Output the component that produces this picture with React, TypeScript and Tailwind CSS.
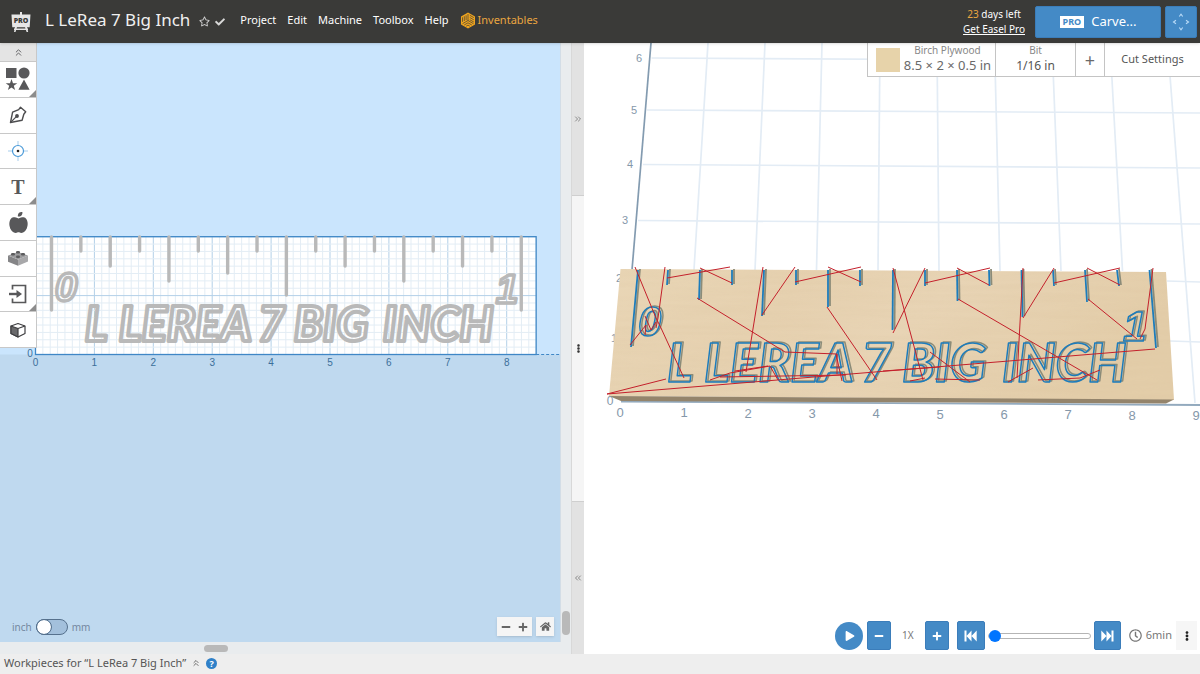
import React from "react";
import { FaAppleAlt, FaHome, FaPlus, FaMinus, FaPlay, FaCheck, FaRegStar, FaRegClock, FaEllipsisV } from "react-icons/fa";
import { ChevronsLeft, ChevronsRight, ChevronsUp } from "lucide-react";

/* ---------- 2D design drawing ---------- */

const SCALE = 58.9;
const ORIGIN_X = 35.5;
const ORIGIN_Y = 311.5;
const BOARD_W = 8.5 * SCALE;
const BOARD_H = 2 * SCALE;

const TICK_ENDS = [267, 208, 223, 208, 238, 208, 230, 208, 252, 208, 223, 208, 238, 208, 223, 208, 267];

const WORDS_2D = [
  { t: "L", x: 85 },
  { t: "LEREA", x: 119 },
  { t: "7", x: 258 },
  { t: "BIG", x: 294 },
  { t: "INCH", x: 383 },
];

function DesignDrawing() {
  const vertical = Array.from({ length: 69 }, (_, i) => i);
  const horizontal = Array.from({ length: 17 }, (_, i) => i);
  const top = ORIGIN_Y - BOARD_H;
  return (
    <svg className="absolute inset-0 h-full w-full" aria-label="Design canvas">
      <rect width="100%" height="100%" fill="#bfd9ef" />
      <rect width="100%" height={ORIGIN_Y} fill="#cae5fd" />
      <rect x={ORIGIN_X} y={top} width={BOARD_W} height={BOARD_H} fill="#fff" />
      {vertical.map((i) => (
        <line
          key={"v" + i}
          x1={ORIGIN_X + (i * SCALE) / 8}
          x2={ORIGIN_X + (i * SCALE) / 8}
          y1={top}
          y2={ORIGIN_Y}
          stroke={i % 8 === 0 ? "#b3d0e8" : "#e3edf5"}
        />
      ))}
      {horizontal.map((i) => (
        <line
          key={"h" + i}
          x1={ORIGIN_X}
          x2={ORIGIN_X + BOARD_W}
          y1={ORIGIN_Y - (i * SCALE) / 8}
          y2={ORIGIN_Y - (i * SCALE) / 8}
          stroke={i % 8 === 0 ? "#b3d0e8" : "#e3edf5"}
        />
      ))}
      <rect x={ORIGIN_X} y={top} width={BOARD_W} height={BOARD_H} fill="none" stroke="#3f87c6" strokeWidth="1.3" />
      <line x1={ORIGIN_X + BOARD_W} x2="100%" y1={ORIGIN_Y} y2={ORIGIN_Y} stroke="#3f87c6" strokeDasharray="3 2" />
      <g stroke="#b9b9b9" strokeWidth="3.4" strokeLinecap="round">
        {TICK_ENDS.map((end, i) => (
          <line key={i} x1={51.5 + i * 29.36} x2={51.5 + i * 29.36} y1="194" y2={end} />
        ))}
      </g>
      <g
        fill="none"
        stroke="#b9b9b9"
        strokeWidth="4"
        strokeLinejoin="round"
        className="font-['Lato',sans-serif] text-[47px] font-black italic"
      >
        {WORDS_2D.map((w) => (
          <text key={w.x} x={w.x} y="298">
            {w.t}
          </text>
        ))}
        <g strokeWidth="3.4" className="font-['Liberation_Sans',sans-serif] text-[40px] font-bold">
          <text x="55" y="258">0</text>
          <text x="496" y="260">1</text>
        </g>
      </g>
      <g fill="#3b6f9a" textAnchor="middle" className="font-['Liberation_Sans',sans-serif] text-[10px]">
        {[0, 1, 2, 3, 4, 5, 6, 7, 8].map((n) => (
          <text key={n} x={ORIGIN_X + n * SCALE} y="323">
            {n}
          </text>
        ))}
        <text x="30" y="314">0</text>
      </g>
    </svg>
  );
}

/* ---------- 3D preview drawing ---------- */

const GRID_3D = [
  [651.5, 58, 1200, 61], [647, 110, 1200, 113], [643, 164.5, 1200, 168], [638, 220.5, 1200, 224],
  [1167, 281, 1200, 282], [1170, 341, 1200, 342],
  [708, 43, 694, 270], [765, 43, 755, 270], [822, 43, 816.5, 270], [880, 43, 878, 270], [937, 43, 939, 271],
  [994.5, 43, 1000, 271], [1052, 43, 1061, 271], [1110, 43, 1122.5, 271], [1167.5, 43, 1195, 403],
];

const TICKS_3D = [
  [638, 631, 347], [668, 667, 285], [700, 699, 300], [732, 732, 285], [764, 762, 316], [796, 796, 285],
  [828, 828, 307], [860, 860, 286], [893, 892.5, 330], [925, 925, 286], [957, 957.5, 301], [989, 989.5, 286],
  [1021.5, 1022.5, 317], [1053, 1054, 286], [1085, 1087, 302], [1117, 1119, 286], [1149.5, 1156, 348],
];

const TRAVEL_MOVES = [
  "635,267 656,318 661,328 684,378", "630,345 646,325 645,335", "645,316 651,330 656,322", "665,267 658,318 656,328",
  "667,278 730,267", "732,283 700,268", "697,298 785,352 837,354 837,374", "763,267 746,372", "795,267 762,315",
  "795,282 861,267", "828,267 861,282", "827,307 877,380", "666,379 607,394 1155,349", "710,380 730,373 770,366 778,380",
  "720,377 846,375", "735,371 768,366", "893,268 923,380", "925,268 893,333", "925,283 990,268", "957,268 989,285",
  "958,299 1097,380", "1023,268 1017,378", "1054,268 1023,318", "1054,283 1120,268", "1087,268 1120,285",
  "1088,299 1137,339", "1153,268 1145,329 1140,339", "930,352 970,382", "935,379 980,380", "883,371 940,367",
  "1038,380 1080,378 1100,370", "1008,382 1033,368", "910,381 925,378", "836,354 842,381",
];

const WORDS_3D = [
  { t: "L", x: 667 },
  { t: "LEREA", x: 704 },
  { t: "7", x: 861 },
  { t: "BIG", x: 902 },
  { t: "INCH", x: 1002 },
];

function ToolOutline() {
  return (
    <g className="drop-shadow-[2px_-1px_0_#8b8b78]" fill="none" stroke="#1c7cbc" strokeWidth="1.5" strokeLinejoin="round">
      {TICKS_3D.map(([x1, x2, y2]) => (
        <line key={x1} x1={x1} y1="270" x2={x2} y2={y2} strokeWidth="1.8" />
      ))}
      <g className="font-['Lato',sans-serif] text-[53px] font-black italic">
        {WORDS_3D.map((w) => (
          <text key={w.x} x={w.x} y="382">
            {w.t}
          </text>
        ))}
        <g className="font-['Liberation_Sans',sans-serif] text-[42px] font-bold">
          <text x="638" y="336">0</text>
          <text x="1123" y="341">1</text>
        </g>
      </g>
    </g>
  );
}

function PreviewDrawing() {
  return (
    <svg className="absolute inset-0 h-full w-full" viewBox="584 43 616 611" preserveAspectRatio="xMinYMin slice" aria-label="Carve preview">
      <defs>
        <linearGradient id="wood" x1="0" y1="0" x2="1" y2="0.25">
          <stop offset="0" stopColor="#e9d6b6" />
          <stop offset="0.35" stopColor="#e6d1b0" />
          <stop offset="0.6" stopColor="#e8d4b5" />
          <stop offset="1" stopColor="#e3cda9" />
        </linearGradient>
        <filter id="grain" x="0" y="0" width="100%" height="100%">
          <feTurbulence type="fractalNoise" baseFrequency="0.012 0.2" numOctaves="2" seed="4" />
          <feColorMatrix values="0 0 0 0 0.62  0 0 0 0 0.45  0 0 0 0 0.25  0.5 0 0 0 -0.14" />
          <feComposite in2="SourceGraphic" operator="in" />
        </filter>
      </defs>
      <g stroke="#e3ecf5" strokeWidth="1.7">
        {GRID_3D.map(([x1, y1, x2, y2], i) => (
          <line key={i} x1={x1} y1={y1} x2={x2} y2={y2} />
        ))}
      </g>
      <line x1="651" y1="43" x2="632" y2="270" stroke="#839bb0" strokeWidth="1.7" />
      <g fill="#8598aa" textAnchor="middle" className="font-['Liberation_Sans',sans-serif] text-[11px]">
        <text x="639" y="62">6</text>
        <text x="634" y="114">5</text>
        <text x="630" y="168">4</text>
        <text x="625" y="224">3</text>
        <text x="619" y="282">2</text>
        <text x="614" y="342">1</text>
      </g>
      <polygon points="620.5,269 1166,272 1174,400 609,396" fill="url(#wood)" />
      <polygon points="620.5,269 1166,272 1174,400 609,396" fill="#000" filter="url(#grain)" opacity="0.3" />
      <line x1="621" y1="401.5" x2="1200" y2="405" stroke="#93aabe" strokeWidth="1.8" />
      <polygon points="609,396 1174,399.500 1166,403.500 621,401" fill="#94846b" />
      <ToolOutline />
      <g fill="none" stroke="#c4202b" strokeWidth="1" strokeLinejoin="round">
        {TRAVEL_MOVES.map((p) => (
          <polyline key={p} points={p} />
        ))}
      </g>
      <g fill="#8598aa" textAnchor="middle" className="font-['Liberation_Sans',sans-serif] text-[13px]">
        {[0, 1, 2, 3, 4, 5, 6, 7, 8, 9].map((n) => (
          <text key={n} x={620 + n * 64} y={417 + n / 3}>
            {n}
          </text>
        ))}
        <text x="610" y="405" className="text-[12px]">0</text>
      </g>
    </svg>
  );
}

/* ---------- icons ---------- */

function EaselLogo() {
  return (
    <svg width="22" height="22" viewBox="0 0 22 22" aria-label="Easel Pro">
      <path d="M10 1h2v3h-2zM5 16h2l-1.500 5H4zM15 16h2l1.200 5h-1.600zM4 17.600h14v1.300H4z" fill="#e6e6e6" />
      <path d="M1.500 3.500h19l-.8 12.700H2.300z" fill="#e6e6e6" />
      <text x="11" y="12" textAnchor="middle" fill="#3a3a38" className="font-['Open_Sans',sans-serif] text-[7px] font-extrabold">PRO</text>
    </svg>
  );
}

function CubeLogo() {
  return (
    <svg width="16" height="17" viewBox="0 0 16 17" aria-hidden="true">
      <path d="M8 .5l7 4v8l-7 4-7-4v-8z" fill="#f0a51e" />
      <g stroke="#3a3a38" strokeWidth="0.7" fill="none">
        <path d="M8 2v6.500l5.500 3.200M8 8.500l-5.500 3.200" />
        <path d="M2.500 5.300v4.500M4.300 4.300v4.700M6.100 3.300v4.800" />
        <path d="M9.800 3.300l4 2.300M9.800 5.500l4 2.300M9.800 7.700l4 2.300" />
        <path d="M4.200 13l3.800-2.200 3.800 2.200M6.200 14.200L8 13.100l1.800 1.100" />
      </g>
    </svg>
  );
}

const ShapesIcon = () => (
  <svg width="26" height="26" viewBox="0 0 26 26" fill="#58585a">
    <rect x="1" y="2" width="10.500" height="10" />
    <circle cx="19" cy="7" r="5.600" />
    <path d="M6.500 13l1.500 4.200h4.300l-3.500 2.600 1.300 4.300-3.600-2.600-3.600 2.600 1.300-4.300L.7 17.200H5zM19 13.500l5.600 10.300H13.400z" />
  </svg>
);

const PenIcon = () => (
  <svg width="20" height="20" viewBox="0 0 20 20" fill="none" stroke="#4d4d4f" strokeWidth="1.400" strokeLinejoin="round">
    <path d="M2.500 17.500L4.600 7.200l6.100-2.600 1.800-2.400 5.200 4.600-1.900 2.400-1.700 6.100z" />
    <path d="M2.500 17.500l5.800-5.800" strokeWidth="1.100" />
    <circle cx="9" cy="11" r="1.200" fill="#4d4d4f" />
  </svg>
);

const DrillIcon = () => (
  <svg width="20" height="20" viewBox="0 0 20 20" fill="none" stroke="#4a9ad8">
    <path d="M10 0v4.500M10 15.500V20M0 10h4.500M15.500 10H20" stroke="#a7cdec" />
    <circle cx="10" cy="10" r="5.500" strokeWidth="1.200" />
    <circle cx="10" cy="10" r="1.300" fill="#222" stroke="none" />
  </svg>
);

const BrickIcon = () => (
  <svg width="22" height="18" viewBox="0 0 22 18">
    <path d="M1 6.500l10 4v6.300l-10-4z" fill="#858587" />
    <path d="M11 10.500l10-4v6l-10 4.300z" fill="#a8a8aa" />
    <path d="M1 6.500L11 3l10 3.500-10 4z" fill="#9c9c9e" />
    <g fill="#5c5c5e">
      <rect x="9" y="2" width="4" height="2.400" rx="1.200" />
      <rect x="4" y="4" width="4" height="2.400" rx="1.200" />
      <rect x="14" y="4" width="4" height="2.400" rx="1.200" />
      <rect x="9" y="6.500" width="4" height="2.400" rx="1.200" />
    </g>
  </svg>
);

const ImportIcon = () => (
  <svg width="20" height="20" viewBox="0 0 20 20" fill="none" stroke="#58585a" strokeWidth="1.700">
    <path d="M4.500 5.500v-4h13v17h-13v-4" />
    <path d="M1 10h8" strokeWidth="2.400" />
    <path d="M8.500 6l5.500 4-5.500 4z" fill="#58585a" stroke="none" />
  </svg>
);

const BoxIcon = () => (
  <svg width="18" height="18" viewBox="0 0 18 18" fill="none" stroke="#3f3f41" strokeWidth="1.200" strokeLinejoin="round">
    <path d="M2 5l7-2.500L16 5v7.500L9 16l-7-3.500z" fill="#fff" />
    <path d="M2 5l7 2.500V16l-7-3.500z" fill="#6a6a6c" />
    <path d="M9 7.500L16 5" />
  </svg>
);

const FastBack = () => (
  <svg width="13" height="12" viewBox="0 0 13 12" fill="#fff">
    <path d="M.5.5h2v11h-2zM7.500.5v11L2.500 6zM12.700.5v11L7.500 6z" />
  </svg>
);

const FastForward = () => (
  <svg width="13" height="12" viewBox="0 0 13 12" fill="#fff">
    <path d="M10.500.5h2v11h-2zM5.500.5v11l5-5.500zM.3.5v11L5.500 6z" />
  </svg>
);

const MoveIcon = () => (
  <svg width="18" height="18" viewBox="0 0 18 18" fill="none" stroke="#b9dbf7" strokeWidth="1.100">
    <path d="M7.300 3.500L9 1.200l1.700 2.300M7.300 14.500L9 16.800l1.700-2.300M4 7.300L1.500 9 4 10.700M14 7.300L16.500 9 14 10.700" />
  </svg>
);

/* ---------- page parts ---------- */

const TOOLS: { name: string; icon: React.ReactNode; more?: boolean }[] = [
  { name: "Shapes", icon: <ShapesIcon />, more: true },
  { name: "Pen", icon: <PenIcon /> },
  { name: "Drill", icon: <DrillIcon /> },
  { name: "Text", icon: <span className="font-['Liberation_Serif',serif] text-xl font-bold leading-none">T</span>, more: true },
  { name: "Icons", icon: <FaAppleAlt size={21} /> },
  { name: "Apps", icon: <BrickIcon /> },
  { name: "Import", icon: <ImportIcon />, more: true },
  { name: "3D", icon: <BoxIcon /> },
];

function Header() {
  return (
    <header className="relative z-10 flex h-[43px] shrink-0 items-center bg-[#3a3a38] pr-[3px] pl-[10px] text-white shadow-sm">
      <a href="#home" aria-label="Home"><EaselLogo /></a>
      <h1 className="ml-[13px] pb-[3px] text-[17px] leading-6 whitespace-nowrap text-[#f0f0f0]">L LeRea 7 Big Inch</h1>
      <button aria-label="Favorite" className="ml-[9px] text-[#d0d0d0]"><FaRegStar size={11} /></button>
      <span className="ml-[5px] text-[#d8d8d8]"><FaCheck size={10} /></span>
      <nav className="ml-[15px] flex items-center gap-[11px] pb-[3px] text-[11px] leading-4">
        <button>Project</button>
        <button>Edit</button>
        <button>Machine</button>
        <button>Toolbox</button>
        <button>Help</button>
        <a href="#inventables" className="flex items-center gap-[2px] text-[#eaa640]"><CubeLogo />Inventables</a>
      </nav>
      <div className="mr-[10px] ml-auto text-center text-[10px] leading-[15px]">
        <p><span className="text-[#eaa640]">23</span> days left</p>
        <a href="#pro" className="underline">Get Easel Pro</a>
      </div>
      <button className="flex h-8 w-[126px] items-center justify-center gap-[7px] rounded-[2px] border border-[#3b7dba] bg-[#448ac6] text-[13px]">
        <span className="bg-white px-[3px] text-[9px] leading-[12px] font-bold text-[#448ac6]">PRO</span>
        Carve...
      </button>
      <button aria-label="Jog machine" className="ml-1 flex h-8 w-8 items-center justify-center rounded-[2px] border border-[#3b7dba] bg-[#448ac6]"><MoveIcon /></button>
    </header>
  );
}

function Toolbar() {
  return (
    <div className="relative flex h-[305px] w-[37px] flex-col divide-y divide-[#c8c8c8] border-r border-b border-[#c8c8c8] bg-white text-[#58585a]">
      <button aria-label="Collapse toolbar" className="flex h-[19px] items-center justify-center bg-[#e4e4e4]"><ChevronsUp size={11} /></button>
      {TOOLS.map((t) => (
        <button key={t.name} aria-label={t.name} className="relative flex flex-1 items-center justify-center">
          {t.icon}
          {t.more && <span className="absolute right-0 bottom-0 border-b-[7px] border-l-[7px] border-b-[#8c8c8c] border-l-transparent" />}
        </button>
      ))}
    </div>
  );
}

function DesignPane() {
  return (
    <section className="flex min-w-0 flex-1 flex-col bg-[#e9ecee]">
      <div className="flex flex-1">
        <div className="relative flex flex-1 flex-col overflow-hidden border-r border-[#d3dde6]">
          <DesignDrawing />
          <Toolbar />
          <div className="relative mt-auto flex items-center pr-[6px] pb-[6px] pl-3 text-[#666]">
            <label className="flex items-center gap-1 text-[10px] leading-4 text-[#7488a0]">
              inch
              <input type="checkbox" role="switch" aria-label="Use millimetres" className="h-4 w-8 appearance-none rounded-full border border-[#56718d] bg-[#a3c0dc] before:block before:h-[14px] before:w-[14px] before:rounded-full before:bg-white before:outline before:outline-[#56718d]" />
              mm
            </label>
            <div className="ml-auto flex h-[19px] w-[35px] items-center justify-around bg-[#f5f5f5] shadow-sm">
              <button aria-label="Zoom out"><FaMinus size={10} /></button>
              <button aria-label="Zoom in"><FaPlus size={10} /></button>
            </div>
            <button aria-label="Reset view" className="ml-1 flex h-[19px] w-[18px] items-center justify-center bg-[#f5f5f5] shadow-sm"><FaHome size={11} /></button>
          </div>
        </div>
        <div className="flex w-[10px] flex-col items-center justify-end pb-[7px]">
          <div className="h-6 w-2 rounded-full bg-[#b9b9b9]" />
        </div>
      </div>
      <div className="flex h-3 items-center pl-[204px]">
        <div className="h-[7px] w-6 rounded-full bg-[#b9b9b9]" />
      </div>
    </section>
  );
}

function Splitter() {
  return (
    <div className="flex w-[13px] flex-col border-l border-[#d8d8d8] text-[#777]">
      <button aria-label="Expand design" className="flex flex-1 items-center justify-center border-b border-[#cfcfcf] bg-[#e2e2e2]"><ChevronsRight size={10} /></button>
      <button aria-label="Resize panes" className="flex flex-2 items-center justify-center bg-[#f5f5f5] text-[#333]"><FaEllipsisV size={9} /></button>
      <button aria-label="Expand preview" className="flex flex-1 items-center justify-center border-t border-[#cfcfcf] bg-[#e2e2e2]"><ChevronsLeft size={10} /></button>
    </div>
  );
}

function PreviewPane() {
  const blue = "flex h-[29px] items-center justify-center rounded-[2px] border border-[#3b7dba] bg-[#448ac6] text-white";
  return (
    <section className="relative flex w-[51.33%] flex-col overflow-hidden bg-white">
      <PreviewDrawing />
      <div className="relative ml-auto flex h-[34px] divide-x divide-[#c4c4c4] border-b border-l border-[#c4c4c4] bg-white text-[#6a6a6a]">
        <button className="flex w-32 items-center pl-2">
          <span className="h-6 w-6 shrink-0 bg-[#e7d3aa]" />
          <span className="flex flex-1 flex-col items-center pb-[2px] whitespace-nowrap">
            <span className="text-[10px] leading-[14px] text-[#888]">Birch Plywood</span>
            <span className="text-[13px] leading-[17px]">8.5 × 2 × 0.5 in</span>
          </span>
        </button>
        <button className="flex w-20 flex-col items-center justify-center pb-[2px]">
          <span className="text-[10px] leading-[14px] text-[#888]">Bit</span>
          <span className="text-[12px] leading-[17px] text-[#555]">1/16 in</span>
        </button>
        <button aria-label="Add bit" className="w-[29px] text-lg leading-none">+</button>
        <button className="w-[95px] text-[11px] text-[#555]">Cut Settings</button>
      </div>
      <div className="relative mt-auto mr-[3px] mb-1 ml-auto flex items-center text-[#777]">
        <button aria-label="Play" className="mr-1 flex h-7 w-7 items-center justify-center rounded-full bg-[#448ac6] pl-[2px] text-white"><FaPlay size={10} /></button>
        <button aria-label="Slower" className={blue + " w-6"}><FaMinus size={10} /></button>
        <span className="w-[34px] text-center text-[10px]">1X</span>
        <button aria-label="Faster" className={blue + " w-6"}><FaPlus size={10} /></button>
        <button aria-label="To start" className={blue + " ml-2 w-7"}><FastBack /></button>
        <input
          type="range"
          aria-label="Simulation position"
          defaultValue={0}
          className="mx-[3px] h-[6px] w-[103px] appearance-none rounded-full border border-[#b5b5b5] bg-white [&::-webkit-slider-thumb]:h-3 [&::-webkit-slider-thumb]:w-3 [&::-webkit-slider-thumb]:appearance-none [&::-webkit-slider-thumb]:rounded-full [&::-webkit-slider-thumb]:bg-[#0075ff]"
        />
        <button aria-label="To end" className={blue + " mr-2 w-[27px]"}><FastForward /></button>
        <FaRegClock size={13} />
        <span className="ml-1 text-[11px]">6min</span>
        <button aria-label="More" className="ml-1 flex h-[29px] w-[21px] items-center justify-center bg-[#f6f6f6] text-[#222]"><FaEllipsisV size={10} /></button>
      </div>
    </section>
  );
}

export default function App() {
  return (
    <div className="flex min-h-screen flex-col bg-[#eee] font-['Noto_Sans',sans-serif]">
      <Header />
      <main className="flex flex-1">
        <DesignPane />
        <Splitter />
        <PreviewPane />
      </main>
      <footer className="flex h-5 shrink-0 items-center gap-[5px] bg-[#eee] px-1 pb-[2px] text-[11px] leading-4 text-[#555]">
        <span>Workpieces for “L LeRea 7 Big Inch”</span>
        <button aria-label="Expand workpieces"><ChevronsUp size={10} /></button>
        <button aria-label="Help" className="flex h-[11px] w-[11px] items-center justify-center rounded-full bg-[#2f80c8] text-[9px] leading-none font-bold text-white">?</button>
      </footer>
    </div>
  );
}
